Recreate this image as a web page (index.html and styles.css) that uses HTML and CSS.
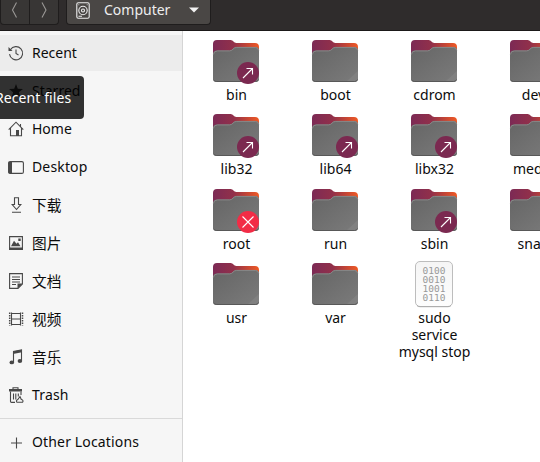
FILE: index.html
```html
<!DOCTYPE html>
<html lang="en">
<head>
<meta charset="utf-8">
<title>Computer</title>
<link rel="stylesheet" href="styles.css">
</head>
<body>
<svg width="0" height="0" class="defs">
  <defs>
    <linearGradient id="back" x1="0" x2="1" y1="0" y2="0">
      <stop offset="0" stop-color="#7c2a55"/><stop offset=".45" stop-color="#92304a"/><stop offset=".75" stop-color="#c64634"/><stop offset="1" stop-color="#f05a24"/>
    </linearGradient>
    <linearGradient id="front" x1="0" x2="1" y1="0" y2="1">
      <stop offset="0" stop-color="#656565"/><stop offset="1" stop-color="#7b7b7b"/>
    </linearGradient>
    <linearGradient id="paper" x1="0" x2="0" y1="0" y2="1">
      <stop offset="0" stop-color="#f5f5f5"/><stop offset="1" stop-color="#fdfdfd"/>
    </linearGradient>
    <symbol id="folder" viewBox="0 0 48 48">
      <path d="M1 6a4 4 0 0 1 4-4h13.500c3 0 3 3 6 3H43a4 4 0 0 1 4 4v20H1z" fill="url(#back)"/>
      <path d="M1 16.500a4 4 0 0 1 4-4h12.500c3.500 0 3.500-3.500 7-3.500H43.500a3.500 3.500 0 0 1 3.500 3.500V40.500a3.500 3.500 0 0 1-3.500 3.500h-39A3.500 3.500 0 0 1 1 40.500z" fill="url(#front)"/>
      <path d="M1.400 16.500a4 4 0 0 1 4-3.600h12.100c3.500 0 3.500-3.500 7-3.500h19a3.500 3.500 0 0 1 3.200 3" fill="none" stroke="#8b8b8b" stroke-width=".9"/>
      <path d="M35.500 43.500 47 33v7a3.500 3.500 0 0 1-3.500 3.500z" fill="#808080"/>
      <path d="M1.500 41.500q.6 2 3 2h39q2.400 0 3-2" fill="none" stroke="#555" stroke-width=".9"/>
    </symbol>
    <symbol id="link" viewBox="0 0 48 48">
      <circle cx="36" cy="35" r="11" fill="#7b2950"/>
      <path d="M31 40 40.500 30.500M34.500 30.500h6V36.500" fill="none" stroke="#fff" stroke-width="1.100"/>
    </symbol>
    <symbol id="denied" viewBox="0 0 48 48">
      <circle cx="36" cy="35" r="11" fill="#f22c46"/>
      <path d="m30.500 29.500 11 11m0-11-11 11" fill="none" stroke="#fff" stroke-width="1.100"/>
    </symbol>
  </defs>
</svg>
<header class="bar">
  <div class="nav">
    <button class="nav-btn"><svg width="16" height="18" viewBox="0 0 16 18"><path d="M9.500 2.500 5.500 10l4 7.500"/></svg></button>
    <button class="nav-btn"><svg width="16" height="18" viewBox="0 0 16 18"><path d="m6 2.500 4 7.500-4 7.500"/></svg></button>
  </div>
  <button class="path">
    <svg class="disk" width="14" height="17" viewBox="0 0 14 17"><rect x=".8" y=".8" width="12.400" height="15.400" rx="1.500"/><circle cx="7" cy="8.500" r="4.200"/><circle cx="7" cy="8.500" r="1.500"/><path d="M2.500 14.200h3.500M2.500 2.700h.7M10.800 2.700h.7"/></svg>
    <span class="path-name">Computer</span>
    <svg class="caret" width="10" height="6" viewBox="0 0 10 6"><path d="M0 .5h10L5 5.500z"/></svg>
  </button>
</header>
<div class="body">
  <aside class="side">
    <ul class="places">
      <li class="place active"><svg class="pi" viewBox="0 0 16 16"><path d="M2.400 4.800A6.600 6.600 0 1 1 1.500 9.200M8 4.500V8.500l2.500 1.500"/><path class="f" d="M.5 2v4h4z"/></svg><span>Recent</span></li>
      <li class="place"><svg class="pi" viewBox="0 0 16 16"><path class="f k" d="m8 1 1.800 4.800 5.200.2-4.100 3.200 1.500 5L8 11.300l-4.400 2.900 1.500-5L1 6l5.200-.2z"/></svg><span>Starred</span></li>
      <li class="place"><svg class="pi" viewBox="0 0 16 16"><path d="m.7 8.700 7.300-7.500 7.300 7.500M2.500 7v7.800h11V7M12.500 3v2.500"/><path class="f" d="M8 9h3v6H8z"/></svg><span>Home</span></li>
      <li class="place"><svg class="pi" viewBox="0 0 16 16"><rect x=".6" y="2.600" width="14.800" height="11.800" rx="1.500"/><path class="f" d="M.6 3h3.400v11.400H.6z"/></svg><span class="wide">Desktop</span></li>
      <li class="place"><svg class="pi" viewBox="0 0 16 16"><path d="M6.500.8h4v6.700h2.300l-4.300 5-4.300-5h2.300zM4 15.300h9"/></svg><span class="cjk">下载</span></li>
      <li class="place"><svg class="pi" viewBox="0 0 16 16"><path d="M1.600 1.600h12.800v12.600H1.600z"/><path class="f" d="M1 12.500h14V15H1zM3 11.200l3-5.500 2.500 3 1.500-1.500 2.500 4zM10.300 3.500h2.400v2.400h-2.400z"/></svg><span class="cjk">图片</span></li>
      <li class="place"><svg class="pi" viewBox="0 0 16 16"><path d="M1.600.6h12.800v10.400l-4.400 4.400H1.600zM4 4h8M4 6.500h8M4 9h8M4 11.500h4"/><path class="f" d="M9.500 10.500h5.200l-5.200 5.200z"/></svg><span class="cjk">文档</span></li>
      <li class="place"><svg class="pi" viewBox="0 0 16 16"><path d="M3.500 1.500v13M12.500 1.500v13M3.500 2.500h9M3.500 8h9M3.500 13.500h9"/><path class="dots" d="M1.700 1.500v13M14.500 1.500v13"/></svg><span class="cjk">视频</span></li>
      <li class="place"><svg class="pi" viewBox="0 0 16 16"><path d="M5.500 13V2.500l8-1.500v10.500"/><path class="f" d="M5 2.500 14 .8v2.500L5 5z"/><ellipse class="f" cx="3.800" cy="13.400" rx="2.300" ry="1.900"/><ellipse class="f" cx="11.900" cy="12" rx="2.300" ry="1.900"/></svg><span class="cjk">音乐</span></li>
      <li class="place"><svg class="pi" viewBox="0 0 16 16"><path d="M2.500 4.500v10q0 .9 1 .9H7M13 4.500V8M5.500 6.500v6M7.800 6.500v6M10.300 6.500v3M5 2.500V.8h5v1.700"/><path class="f" d="M1 2h13v2.500H1z"/><path d="M9 15.300q-1.500-1.800.8-2.800l2.200-3 1.300 3q2.700.8 1.200 2.800z"/></svg><span class="wide">Trash</span></li>
    </ul>
    <div class="place other"><svg class="pi" viewBox="0 0 16 16"><path d="M8.500 3.500v11M3 9h11"/></svg><span class="wide">Other Locations</span></div>
  </aside>
  <main class="files">
    <div class="item"><svg class="icon"><use href="#folder"/><use href="#link"/></svg><span>bin</span></div>
    <div class="item"><svg class="icon"><use href="#folder"/></svg><span>boot</span></div>
    <div class="item"><svg class="icon"><use href="#folder"/></svg><span>cdrom</span></div>
    <div class="item"><svg class="icon"><use href="#folder"/></svg><span>dev</span></div>
    <div class="item"><svg class="icon"><use href="#folder"/><use href="#link"/></svg><span>lib32</span></div>
    <div class="item"><svg class="icon"><use href="#folder"/><use href="#link"/></svg><span>lib64</span></div>
    <div class="item"><svg class="icon"><use href="#folder"/><use href="#link"/></svg><span>libx32</span></div>
    <div class="item"><svg class="icon"><use href="#folder"/></svg><span>media</span></div>
    <div class="item"><svg class="icon"><use href="#folder"/><use href="#denied"/></svg><span>root</span></div>
    <div class="item"><svg class="icon"><use href="#folder"/></svg><span>run</span></div>
    <div class="item"><svg class="icon"><use href="#folder"/><use href="#link"/></svg><span>sbin</span></div>
    <div class="item"><svg class="icon"><use href="#folder"/></svg><span>snap</span></div>
    <div class="item"><svg class="icon"><use href="#folder"/></svg><span>usr</span></div>
    <div class="item"><svg class="icon"><use href="#folder"/></svg><span>var</span></div>
    <div class="item"><svg class="icon" viewBox="0 0 48 48"><rect x="5.500" y=".5" width="37" height="45" rx="4.500" fill="url(#paper)" stroke="#bdbdbd"/><path d="M7 44.500q1 1.200 3 1.200h28q2 0 3-1.200" fill="none" stroke="#aaa"/><g class="bits"><text x="12.500" y="13" textLength="23">0100</text><text x="12.500" y="22" textLength="23">0010</text><text x="12.500" y="31" textLength="23">1001</text><text x="12.500" y="40" textLength="23">0110</text></g></svg><span>sudo<br>service<br>mysql stop</span></div>
  </main>
</div>
<div class="tip">Recent files</div>
</body>
</html>
```
FILE: styles.css
```css
* { box-sizing: border-box; }
body {
  margin: 0;
  width: 540px;
  height: 462px;
  overflow: hidden;
  display: flex;
  flex-direction: column;
  background: #fff;
  color: #0c0c0c;
  font: 14px/17px "Noto Sans", "Noto Sans CJK SC", sans-serif;
}
.defs { position: absolute; }
button { margin: 0; padding: 0; font: inherit; color: inherit; }
.bar {
  flex: none;
  height: 31px;
  padding: 0 1px 6px 0;
  display: flex;
  gap: 7px;
  background: #2f2c2c;
  border-bottom: 1px solid #1b1919;
}
.nav { display: flex; width: 59px; }
.nav-btn {
  flex: 1;
  height: 25px;
  display: flex;
  align-items: flex-start;
  justify-content: center;
  background: #383635;
  border: solid #1f1d1d;
  border-width: 0 1px 1px;
  border-radius: 0 0 0 4px;
}
.nav-btn + .nav-btn { border-left: 0; border-radius: 0 0 4px 0; }
.nav-btn path { fill: none; stroke: #9a9896; stroke-width: 1.1; }
.path {
  width: 145px;
  height: 25px;
  padding: 0 11px 4px 9px;
  display: flex;
  align-items: center;
  background: #4a4745;
  border: solid #1f1d1d;
  border-width: 0 1px 1px;
  border-radius: 0 0 4px 4px;
  color: #eee;
}
.disk { fill: none; stroke: #eee; stroke-width: 1.1; }
.path-name { margin-left: 14px; padding-bottom: 2px; }
.caret { margin-left: auto; fill: #f2f2f2; }
.body { flex: 1; display: flex; min-height: 0; }
.side {
  flex: none;
  width: 183px;
  padding-top: 4px;
  background: #f6f6f6;
  border-right: 1px solid #d5d5d5;
}
.places {
  margin: 0;
  padding: 0 0 5px;
  list-style: none;
  display: flex;
  flex-direction: column;
  gap: 2px;
  border-bottom: 1px solid #d9d9d9;
}
.place { height: 36px; padding-left: 8px; display: flex; align-items: center; gap: 8px; }
.place span { padding-bottom: 2px; }
.place.active { background: #ececec; }
.other { margin-top: 5px; }
.pi { width: 16px; height: 16px; fill: none; stroke: #484848; stroke-width: 1.1; overflow: visible; }
.pi .f { fill: #484848; stroke: none; }
.pi .k { fill: #3d3d3d; }
.pi .dots { stroke-width: 1.5; stroke-dasharray: 1.5 1; }
.wide { letter-spacing: .15px; }
.cjk { font-family: "Noto Sans CJK SC", sans-serif; font-size: 14.67px; }
.files {
  flex: 1;
  padding: 7px 0 0 3px;
  display: grid;
  grid-template-columns: repeat(4, 99px);
  grid-template-rows: 74px 75px 74px auto;
  overflow: hidden;
}
.item { display: flex; flex-direction: column; align-items: center; text-align: center; }
.item span { padding-left: 2px; }
.icon { width: 48px; height: 48px; flex: none; }
.bits text { font: 9.5px "DejaVu Sans Mono", monospace; fill: #999; }
.tip {
  position: absolute;
  left: -14px;
  top: 76px;
  width: 98px;
  height: 43px;
  padding: 13px 0 0 9px;
  border-radius: 4px;
  background: rgba(0, 0, 0, .8);
  color: #fff;
  letter-spacing: .08px;
  white-space: nowrap;
}
```
